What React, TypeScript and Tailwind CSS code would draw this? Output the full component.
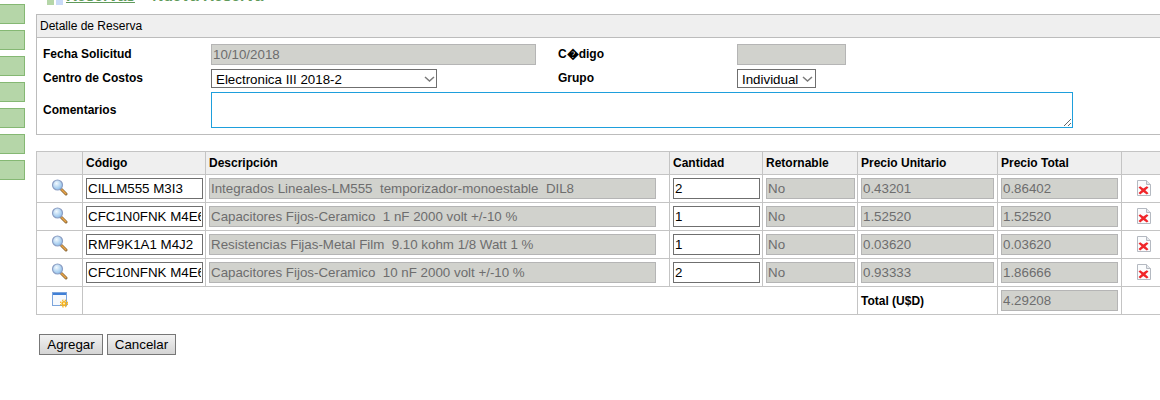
import React from "react";

const Magnifier = () => (
  <svg width="17" height="17" viewBox="0 0 17 17" className="block">
    <defs>
      <radialGradient id="lens" cx="40%" cy="35%" r="70%">
        <stop offset="0%" stopColor="#f2f9fe" />
        <stop offset="100%" stopColor="#86bbe9" />
      </radialGradient>
    </defs>
    <path d="M10.5 10.5 L15 15" stroke="#8a6a3a" strokeWidth="3" strokeLinecap="round" />
    <path d="M10.8 10.8 L14.8 14.8" stroke="#eda546" strokeWidth="1.5" strokeLinecap="round" />
    <circle cx="6.5" cy="6" r="5" fill="url(#lens)" stroke="#8d9fc4" strokeWidth="1.2" />
  </svg>
);

const DeleteIcon = () => (
  <svg width="14" height="16" viewBox="0 0 14 16" className="block">
    <path d="M0.5 0.5 H9.5 L13.5 4.5 V15.5 H0.5 Z" fill="#fbfcfd" stroke="#b4b9c1" />
    <path d="M9.5 0.5 V4.5 H13.5" fill="#e4e7ec" stroke="#b4b9c1" />
    <path d="M1.5 7.5 L3.2 6.2 L6.3 8.6 L9.8 6.2 L11.5 7.6 L8.4 10.3 L11.5 13.2 L9.8 14.6 L6.3 12.1 L3.2 14.6 L1.5 13.1 L4.5 10.3 Z" fill="#f0262a" />
  </svg>
);

const NewIcon = () => (
  <svg width="16" height="16" viewBox="0 0 16 16" className="block">
    <rect x="0.5" y="0.5" width="14" height="13" fill="#f6f9fd" stroke="#7ba4dc" />
    <rect x="1" y="1" width="13" height="2" fill="#3f7fd6" />
    <circle cx="12" cy="11.5" r="2.6" fill="#f7b21c" />
    <circle cx="12" cy="11.5" r="3.5" fill="none" stroke="#f7b21c" strokeWidth="1.2" strokeDasharray="1.6 1.2" />
    <circle cx="12" cy="11.5" r="1" fill="#fff3c4" />
  </svg>
);

const Chevron = () => (
  <svg width="11" height="6" viewBox="0 0 11 6" className="block">
    <path d="M1 1 L5.5 5 L10 1" fill="none" stroke="#7a7a7a" strokeWidth="1.5" />
  </svg>
);

const ro =
  "h-[21px] border border-[#b5b5b5] bg-[#d1d2cd] px-[1px] text-[13.33px] font-normal text-[#6d6d6d] outline-none";
const rw =
  "h-[21px] border border-[#6f6f6f] bg-white px-[1px] text-[13.33px] font-normal text-black outline-none";

const rows = [
  { code: "CILLM555 M3I3", desc: "Integrados Lineales-LM555  temporizador-monoestable  DIL8", qty: "2", unit: "0.43201", total: "0.86402" },
  { code: "CFC1N0FNK M4E6", desc: "Capacitores Fijos-Ceramico  1 nF 2000 volt +/-10 %", qty: "1", unit: "1.52520", total: "1.52520" },
  { code: "RMF9K1A1 M4J2", desc: "Resistencias Fijas-Metal Film  9.10 kohm 1/8 Watt 1 %", qty: "1", unit: "0.03620", total: "0.03620" },
  { code: "CFC10NFNK M4E6", desc: "Capacitores Fijos-Ceramico  10 nF 2000 volt +/-10 %", qty: "2", unit: "0.93333", total: "1.86666" },
];

const th = "border border-[#c4c4c4] bg-[#efefef] px-[3px] text-left align-middle text-[12px] font-bold text-black";
const td = "border border-[#c4c4c4] px-[3px] align-middle";
const sel = "h-[19px] appearance-none rounded-none border border-[#6f6f6f] bg-white pb-[2px] text-[13.33px] font-normal text-black outline-none";
const btn = "h-[21px] border border-[#777777] bg-gradient-to-b from-[#f2f2f2] to-[#d4d4d4] text-[13.33px]";

export default function App() {
  return (
    <div className="flex h-[400px] w-[1160px] overflow-hidden bg-white font-['Liberation_Sans',Arial,sans-serif] text-[12px] text-black">
      <div className="flex w-[25px] shrink-0 flex-col gap-[6px] pt-[4px]">
        {[0, 1, 2, 3, 4, 5, 6].map((i) => (
          <div key={i} className="h-[20px] border border-l-0 border-[#85b873] bg-[#b5d6a8]" />
        ))}
      </div>

      <div className="ml-[11px] w-[1130px] shrink-0">
        <div className="flex h-[14px] items-start overflow-hidden pl-[11px]">
          <div className="h-[5px] w-[7px] bg-[#b5d6a8]" />
          <div className="ml-[2px] h-[5px] w-[7px] bg-[#c9daf8]" />
          <div className="ml-[3px] -mt-[13px] whitespace-nowrap text-[15.5px] font-bold leading-[18px] text-[#5f9a5a]">
            <span className="underline">Reservas</span> » Nueva Reserva
          </div>
        </div>

        <div className="h-[121px] border border-r-0 border-[#bcbcbc]">
          <div className="flex h-[23px] items-center border-b border-[#bcbcbc] bg-[#efefef] pl-[3px] text-[12px]">
            Detalle de Reserva
          </div>
          <div className="grid grid-cols-[168px_347px_179px_1fr] grid-rows-[25px_23px_auto] pl-[6px] pt-[6px] font-bold">
            <div className="flex items-center pb-[6px]">Fecha Solicitud</div>
            <div>
              <input readOnly value="10/10/2018" className={`${ro} block w-[325px]`} />
            </div>
            <div className="flex items-center pb-[6px]">{"C\uFFFDdigo"}</div>
            <div>
              <input readOnly value="" className={`${ro} block w-[109px]`} />
            </div>

            <div className="flex items-center pb-[6px]">Centro de Costos</div>
            <div className="relative h-[19px] w-[226px]">
              <select className={`${sel} block w-[226px] pl-[4px]`} defaultValue="a">
                <option value="a">Electronica III 2018-2</option>
              </select>
              <div className="pointer-events-none absolute right-[2px] top-[7px]"><Chevron /></div>
            </div>
            <div className="flex items-center pb-[6px]">Grupo</div>
            <div className="relative h-[19px] w-[79px]">
              <select className={`${sel} block w-[79px] pl-[4px]`} defaultValue="i">
                <option value="i">Individual</option>
              </select>
              <div className="pointer-events-none absolute right-[3px] top-[7px]"><Chevron /></div>
            </div>

            <div className="flex items-center pb-[1px]">Comentarios</div>
            <div className="col-span-3">
              <textarea className="block h-[36px] w-[862px] border border-[#1e9fdc] bg-white outline-none" />
            </div>
          </div>
        </div>

        <table className="mt-[16px] w-[1128px] table-fixed border-collapse">
          <colgroup>
            <col className="w-[46px]" />
            <col className="w-[123px]" />
            <col className="w-[464px]" />
            <col className="w-[93px]" />
            <col className="w-[95px]" />
            <col className="w-[140px]" />
            <col className="w-[124px]" />
            <col className="w-[43px]" />
          </colgroup>
          <thead>
            <tr className="h-[23px]">
              <th className={th}></th>
              <th className={th}>Código</th>
              <th className={th}>Descripción</th>
              <th className={th}>Cantidad</th>
              <th className={th}>Retornable</th>
              <th className={th}>Precio Unitario</th>
              <th className={th}>Precio Total</th>
              <th className={th}></th>
            </tr>
          </thead>
          <tbody>
            {rows.map((r) => (
              <tr key={r.code} className="h-[28px]">
                <td className={td}>
                  <div className="flex justify-center pb-[2px]"><Magnifier /></div>
                </td>
                <td className={td}>
                  <input readOnly value={r.code} className={`${rw} block w-[117px]`} />
                </td>
                <td className={td}>
                  <input readOnly value={r.desc} className={`${ro} block w-[447px]`} />
                </td>
                <td className={td}>
                  <input readOnly value={r.qty} className={`${rw} block w-[87px]`} />
                </td>
                <td className={td}>
                  <input readOnly value="No" className={`${ro} block w-[89px]`} />
                </td>
                <td className={td}>
                  <input readOnly value={r.unit} className={`${ro} block w-[133px]`} />
                </td>
                <td className={td}>
                  <input readOnly value={r.total} className={`${ro} block w-[117px]`} />
                </td>
                <td className={td}>
                  <div className="flex justify-center pb-[1px] pl-[2px]"><DeleteIcon /></div>
                </td>
              </tr>
            ))}
            <tr className="h-[28px]">
              <td className={td}>
                <div className="flex justify-center pb-[1px]"><NewIcon /></div>
              </td>
              <td className={td} colSpan={4}></td>
              <td className={`${td} font-bold`}>Total (U$D)</td>
              <td className={td}>
                <input readOnly value="4.29208" className={`${ro} block w-[117px]`} />
              </td>
              <td className={td}></td>
            </tr>
          </tbody>
        </table>

        <div className="mt-[19px] flex gap-[4px] pl-[3px]">
          <button className={`${btn} w-[64px]`}>Agregar</button>
          <button className={`${btn} w-[69px]`}>Cancelar</button>
        </div>
      </div>
    </div>
  );
}
